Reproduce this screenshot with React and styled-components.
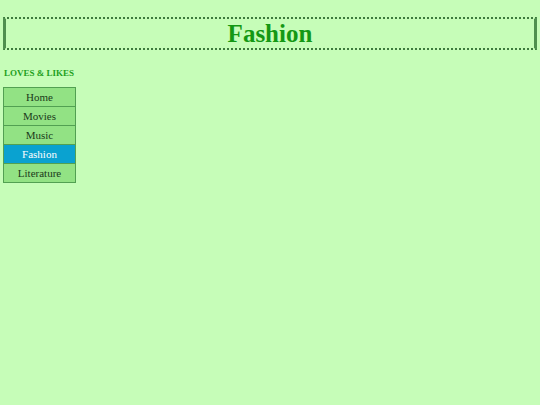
import React from "react";
import styled, { createGlobalStyle } from 'styled-components';

const GlobalStyle = createGlobalStyle`
  html, body {
    margin: 0;
    padding: 0;
    background: #c6fdb8;
  }
  body {
    font-family: "Liberation Serif", "Times New Roman", serif;
  }
`

const Page = styled.div`
  padding: 17px 3px 0 3px;
`

const Header = styled.h1`
  margin: 0;
  height: 29px;
  border-top: 2px dotted #3d7a3d;
  border-bottom: 2px dotted #3d7a3d;
  border-left: 3px solid #4f8f4f;
  border-right: 3px solid #4f8f4f;
  text-align: center;
  font-size: 25px;
  line-height: 30px;
  font-weight: bold;
  color: #149814;
`

const Title = styled.h2`
  margin: 17px 0 0 1px;
  font-size: 9px;
  font-weight: bold;
  text-transform: uppercase;
  color: #1ea01e;
  line-height: 12px;
`

const Menu = styled.ul`
  list-style: none;
  margin: 8px 0 0 0;
  padding: 0;
  width: 71px;
  border: 1px solid #52a052;
`

const MenuItem = styled.li`
  height: 18px;
  line-height: 18px;
  text-align: center;
  font-size: 11px;
  background: ${props => props.active ? '#0aa2d0' : '#92e284'};
  color: ${props => props.active ? '#ffffff' : '#1a3a1a'};
  border-top: ${props => props.first ? 'none' : '1px solid #52a052'};
`

const items = ['Home', 'Movies', 'Music', 'Fashion', 'Literature'];

function App() {
  return (
    <Page>
      <GlobalStyle />
      <Header>Fashion</Header>
      <Title>Loves &amp; Likes</Title>
      <Menu>
        {items.map((name, i) => (
          <MenuItem key={name} first={i === 0} active={name === 'Fashion'}>{name}</MenuItem>
        ))}
      </Menu>
    </Page>
  );
}

export default App;
